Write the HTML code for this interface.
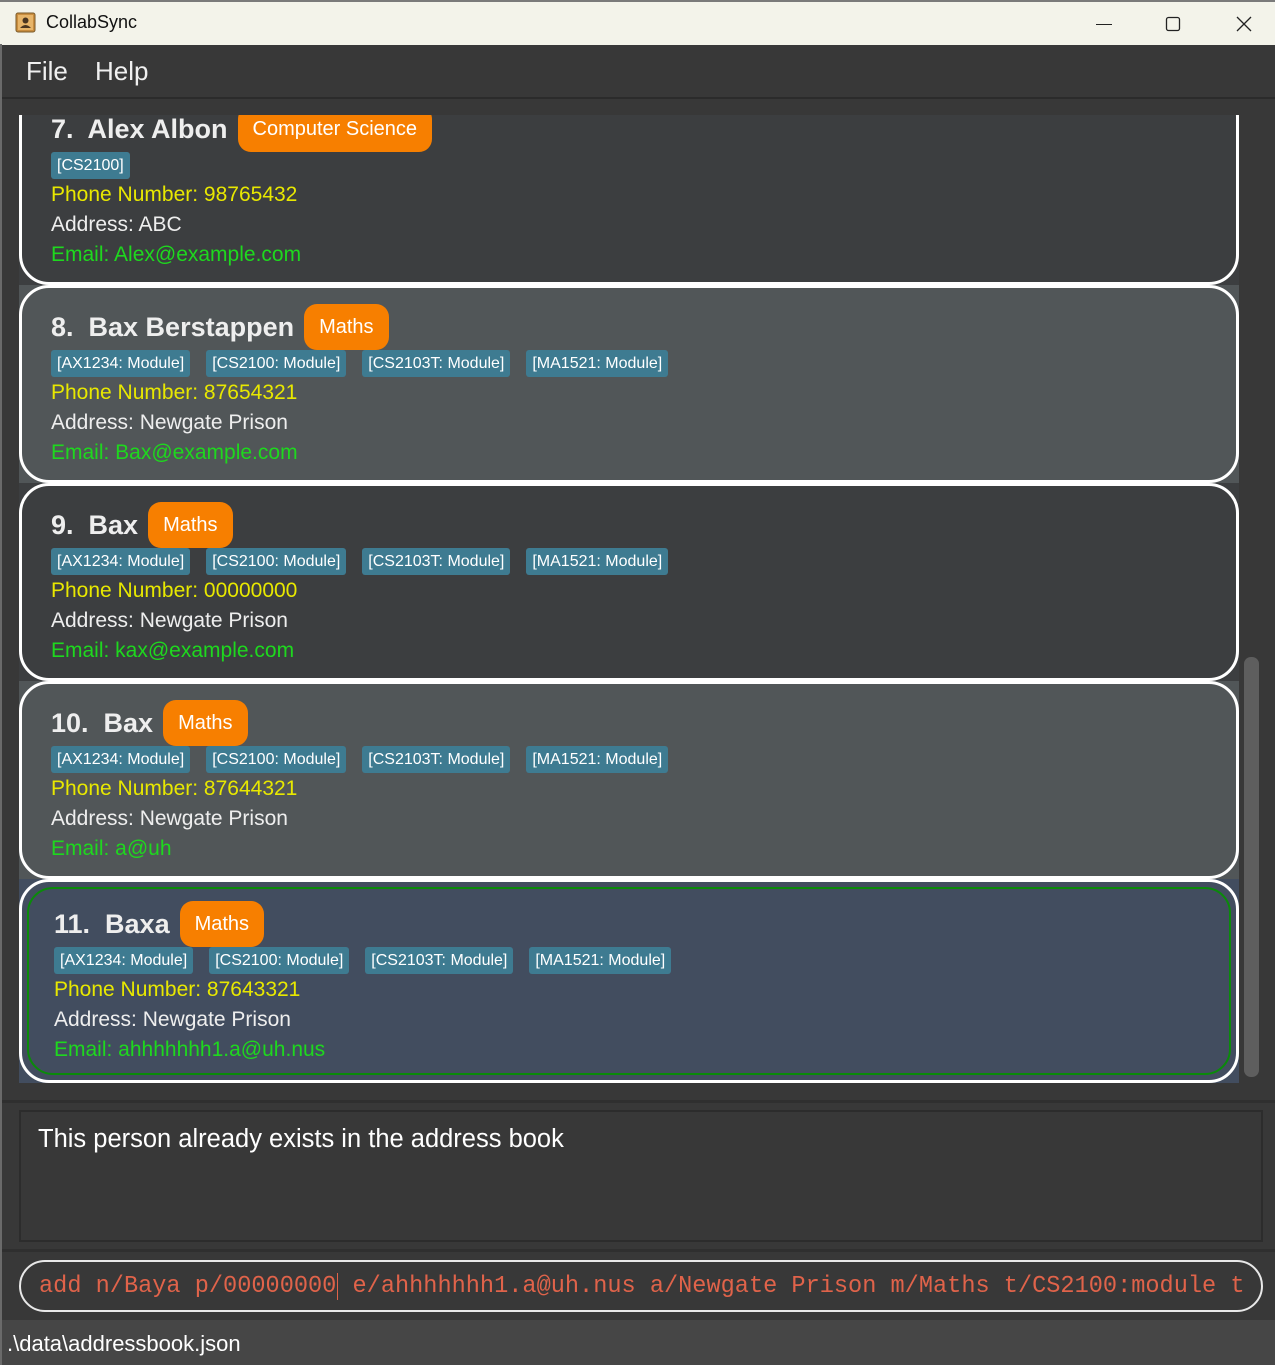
<!DOCTYPE html>
<html><head><meta charset="utf-8"><style>
*{margin:0;padding:0;box-sizing:border-box}
body{width:1275px;height:1365px;background:#383838;font-family:"Liberation Sans",sans-serif;position:relative;overflow:hidden}
.abs{position:absolute}
.title{left:0;top:0;width:1275px;height:45px;background:#f3f3ea;border-top:2px solid #7a7a7a}
.menu{top:45px;left:0;width:1275px;height:54px;background:#383838;border-bottom:2px solid #2b2b2b}
.menu span{position:absolute;top:11px;font-size:26px;color:#f0f0f0}
.list{left:19px;top:115px;width:1220px;height:968px;overflow:hidden}
.row{position:absolute;left:0;width:1220px;height:198px}
.card{position:absolute;inset:0;border:3px solid #fff;border-radius:30px}
.c{position:absolute;left:32px;top:0}
.nm{position:absolute;left:0;top:24px;height:36px;line-height:36px;white-space:nowrap;font-size:27px;font-weight:bold;color:#eee;display:flex;align-items:center}
.pill{display:inline-block;margin-left:10px;background:#f77f00;color:#fff;font-weight:normal;font-size:20px;height:46px;line-height:46px;padding:0 15px;border-radius:13px}
.tags{position:absolute;top:65px;left:0;display:flex;gap:16px;white-space:nowrap}
.tag{background:#3e7b91;color:#fff;font-size:16px;height:27px;line-height:27px;padding:0 6px;border-radius:3px}
.ln{position:absolute;left:0;font-size:21px;white-space:nowrap;height:30px;line-height:30px}
.y{top:93px;color:#e8e800}.w{top:123px;color:#eee}.g{top:153px;color:#1ed81e}
</style></head><body>
<div class="abs title">
<svg class="abs" style="left:15px;top:10px" width="21" height="21" viewBox="0 0 21 21"><rect x="1" y="1" width="19" height="19" rx="2" fill="#c98d3f" stroke="#7a5a2a"/><rect x="3" y="3" width="15" height="15" fill="#e7b56a"/><circle cx="10.5" cy="8.5" r="3" fill="#4a3520"/><path d="M5 16 Q10.5 10 16 16Z" fill="#4a3520"/></svg>
<span class="abs" style="left:46px;top:10px;font-size:18px;color:#111">CollabSync</span>
<svg class="abs" style="left:1096px;top:14px" width="160" height="20"><line x1="0" y1="8.5" x2="16" y2="8.5" stroke="#222" stroke-width="1"/><rect x="70.5" y="1.5" width="13" height="13" rx="2" fill="none" stroke="#222" stroke-width="1.3"/><path d="M141 1 L155 15 M155 1 L141 15" stroke="#222" stroke-width="1.3"/></svg>
</div>
<div class="abs menu"><span style="left:26px">File</span><span style="left:95px">Help</span></div>

<div class="abs list">
<div class="row" style="top:-28px;background:#3c3e40"><div class="card"></div><div class="c">
<div class="nm">7.&nbsp; Alex Albon<span class="pill">Computer Science</span></div>
<div class="tags"><span class="tag">[CS2100]</span></div>
<div class="ln y">Phone Number: 98765432</div><div class="ln w">Address: ABC</div><div class="ln g">Email: Alex@example.com</div></div></div>

<div class="row" style="top:170px;background:#515658"><div class="card"></div><div class="c">
<div class="nm">8.&nbsp; Bax Berstappen<span class="pill">Maths</span></div>
<div class="tags"><span class="tag">[AX1234: Module]</span><span class="tag">[CS2100: Module]</span><span class="tag">[CS2103T: Module]</span><span class="tag">[MA1521: Module]</span></div>
<div class="ln y">Phone Number: 87654321</div><div class="ln w">Address: Newgate Prison</div><div class="ln g">Email: Bax@example.com</div></div></div>

<div class="row" style="top:368px;background:#3c3e40"><div class="card"></div><div class="c">
<div class="nm">9.&nbsp; Bax<span class="pill">Maths</span></div>
<div class="tags"><span class="tag">[AX1234: Module]</span><span class="tag">[CS2100: Module]</span><span class="tag">[CS2103T: Module]</span><span class="tag">[MA1521: Module]</span></div>
<div class="ln y">Phone Number: 00000000</div><div class="ln w">Address: Newgate Prison</div><div class="ln g">Email: kax@example.com</div></div></div>

<div class="row" style="top:566px;background:#515658"><div class="card"></div><div class="c">
<div class="nm">10.&nbsp; Bax<span class="pill">Maths</span></div>
<div class="tags"><span class="tag">[AX1234: Module]</span><span class="tag">[CS2100: Module]</span><span class="tag">[CS2103T: Module]</span><span class="tag">[MA1521: Module]</span></div>
<div class="ln y">Phone Number: 87644321</div><div class="ln w">Address: Newgate Prison</div><div class="ln g">Email: a@uh</div></div></div>

<div class="row" style="top:764px;height:204px;background:#424d5f"><div class="card"></div>
<div style="position:absolute;left:8px;top:8px;right:8px;bottom:8px;border:2px solid #0a8a0a;border-radius:26px"></div>
<div class="c" style="left:35px;top:3px">
<div class="nm">11.&nbsp; Baxa<span class="pill">Maths</span></div>
<div class="tags"><span class="tag">[AX1234: Module]</span><span class="tag">[CS2100: Module]</span><span class="tag">[CS2103T: Module]</span><span class="tag">[MA1521: Module]</span></div>
<div class="ln y">Phone Number: 87643321</div><div class="ln w">Address: Newgate Prison</div><div class="ln g">Email: ahhhhhhh1.a@uh.nus</div></div></div>
</div>
<div class="abs" style="left:1244px;top:657px;width:15px;height:420px;background:#5e5e5e;border-radius:7px"></div>

<div class="abs" style="left:0;top:1100px;width:1275px;height:3px;background:#2f2f2f"></div>
<div class="abs" style="left:19px;top:1110px;width:1244px;height:132px;border:2px solid #2c2c2c;background:#383838"></div>
<div class="abs" style="left:38px;top:1125px;font-size:25.5px;color:#fff">This person already exists in the address book</div>
<div class="abs" style="left:0;top:1249px;width:1275px;height:3px;background:#2f2f2f"></div>
<div class="abs" style="left:19px;top:1260px;width:1244px;height:52px;border:2px solid #e8e8e8;border-radius:26px;overflow:hidden">
<div style="position:absolute;left:18px;top:11px;font-family:'Liberation Mono',monospace;font-size:23.6px;color:#e0634a;white-space:nowrap">add n/Baya p/00000000<span style="border-left:1.5px solid #e0634a;margin-left:1px"></span> e/ahhhhhhh1.a@uh.nus a/Newgate Prison m/Maths t/CS2100:module t</div></div>
<div class="abs" style="left:0;top:1320px;width:1275px;height:45px;background:#464646"></div>
<div class="abs" style="left:7px;top:1331px;font-size:22px;color:#fff">.\data\addressbook.json</div>
<div class="abs" style="left:0;top:44px;width:2px;height:1321px;background:#6a6a6a"></div>
</body></html>
